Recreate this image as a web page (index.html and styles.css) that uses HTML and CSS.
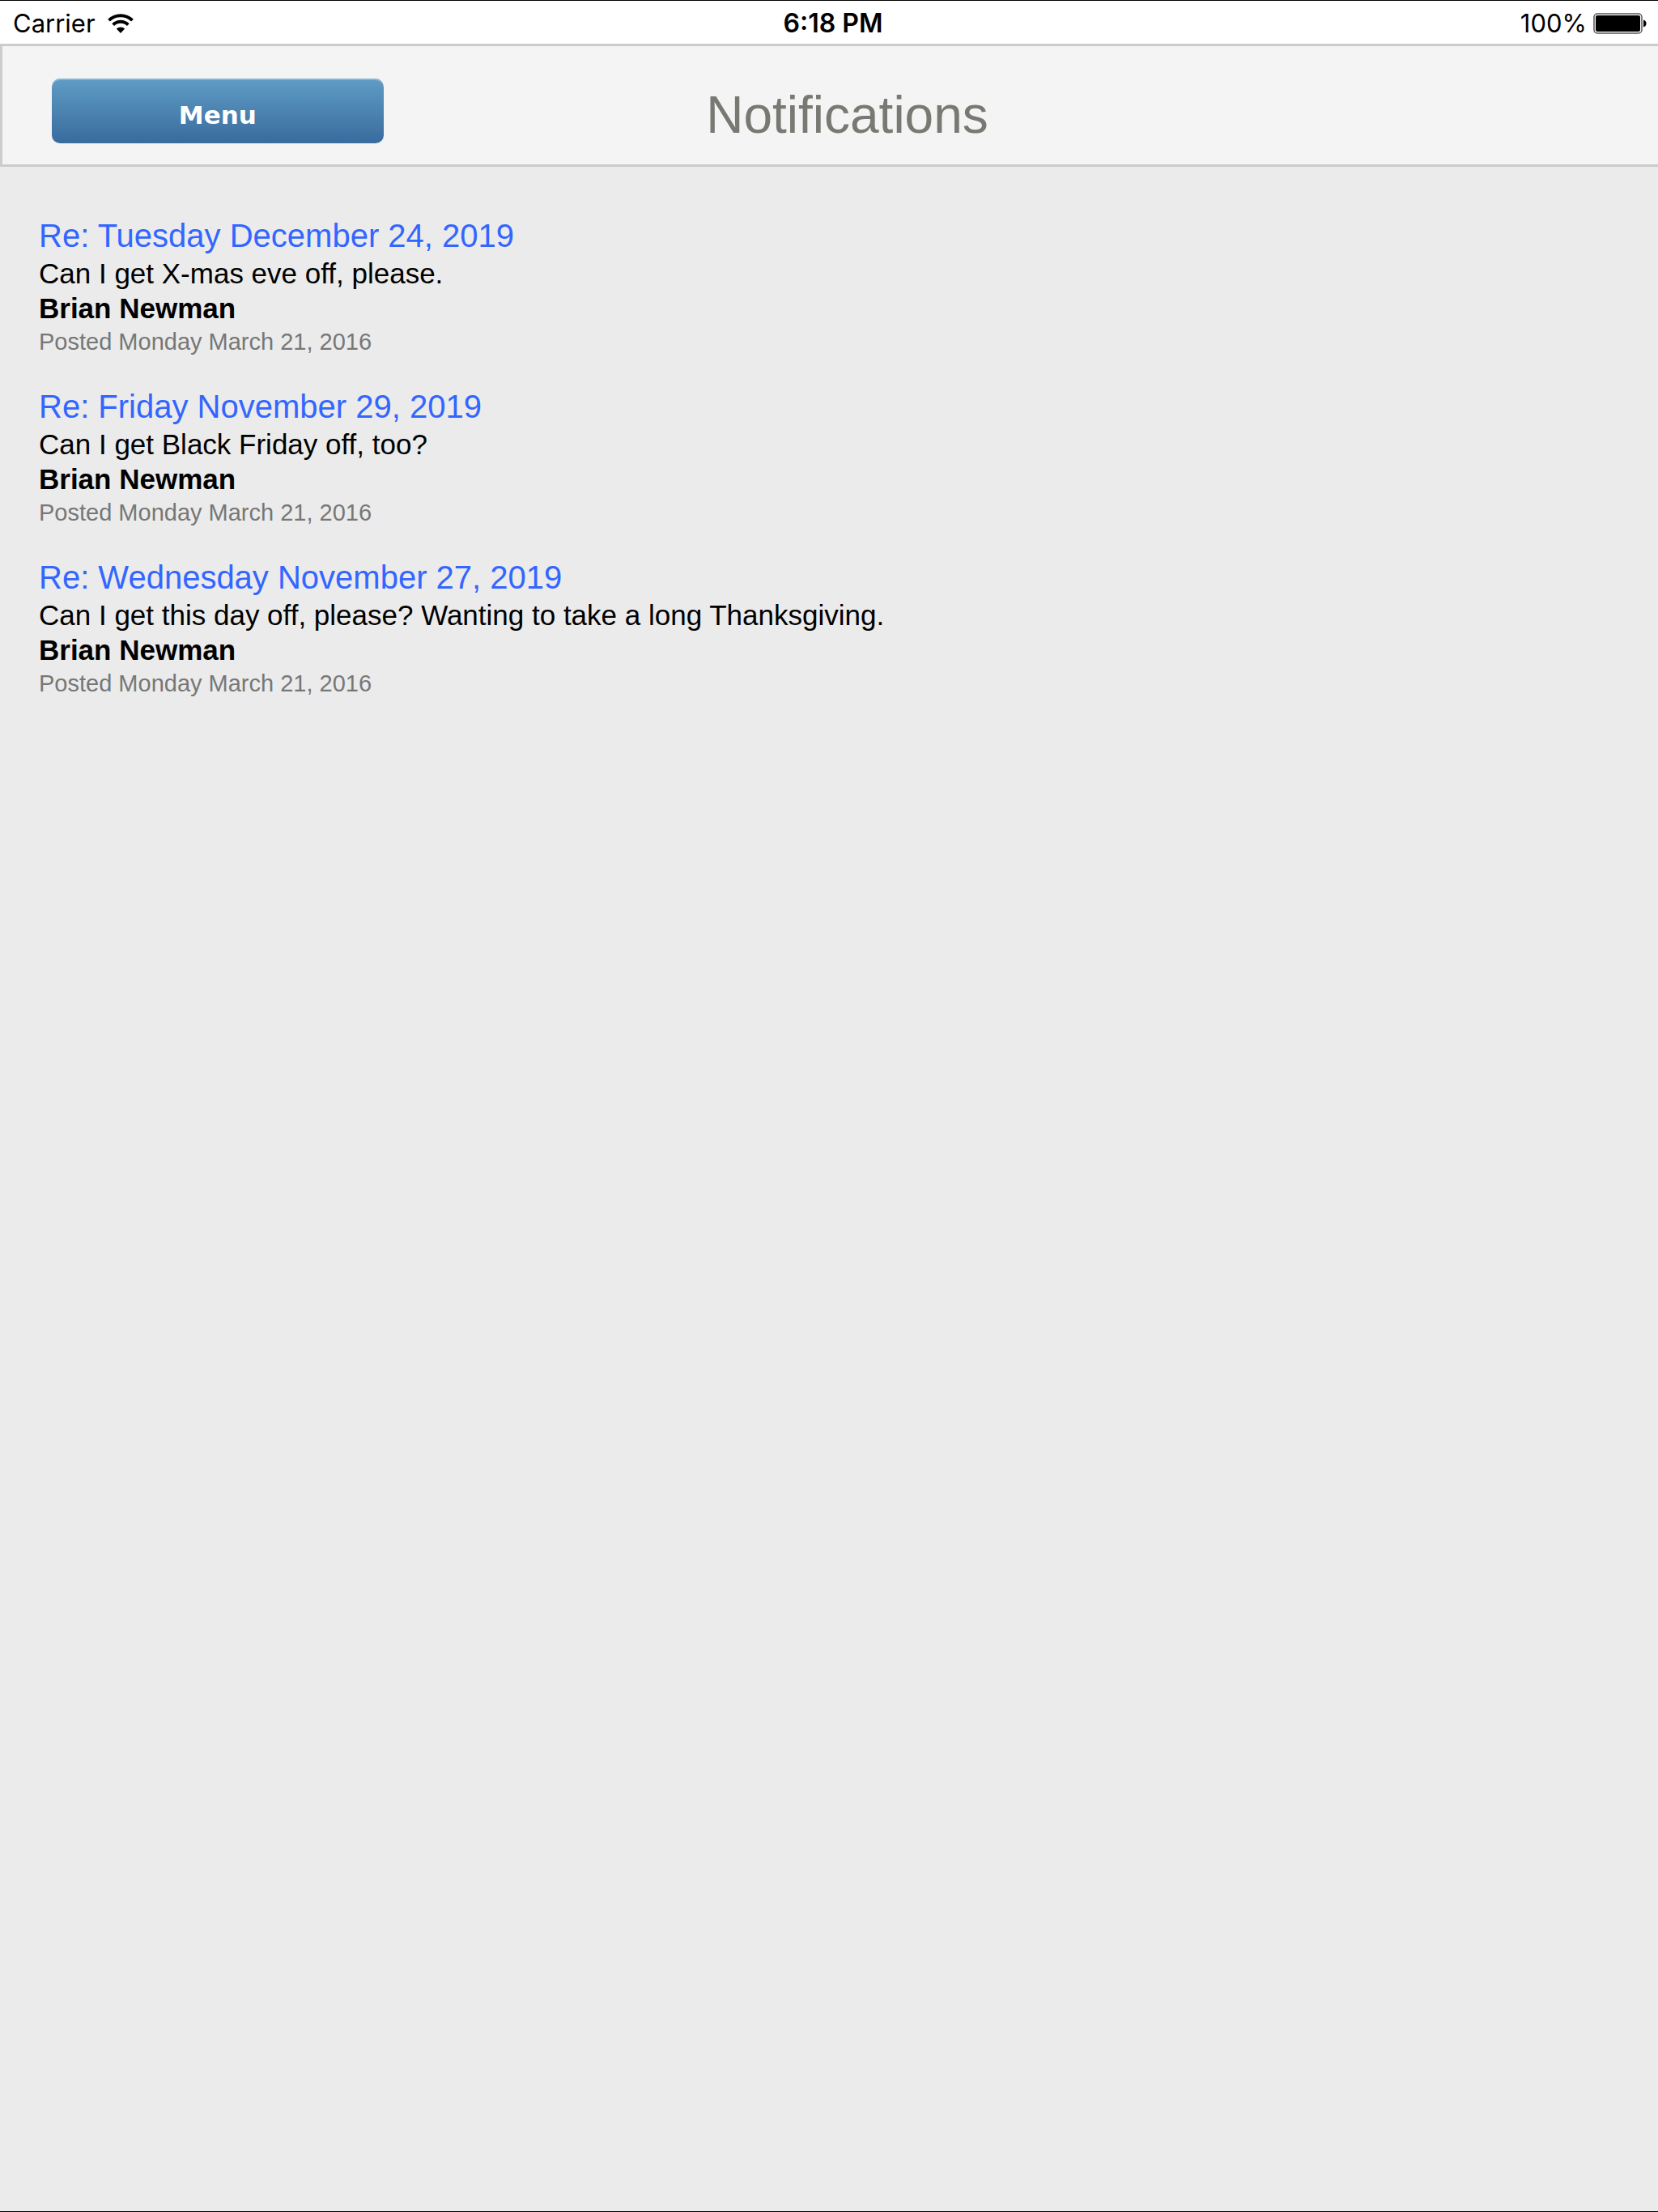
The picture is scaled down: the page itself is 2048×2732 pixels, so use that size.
FILE: index.html
```html
<!DOCTYPE html>
<html lang="en">
<head>
<meta charset="utf-8">
<meta name="viewport" content="width=device-width, initial-scale=1">
<title>Notifications</title>
<link rel="stylesheet" href="styles.css">
</head>
<body>
<div class="status-bar">
  <div class="status-left">
    <span>Carrier</span>
    <svg class="wifi" viewBox="0 0 34 26" aria-hidden="true">
      <path d="M2.500 9.200 A20.500 20.500 0 0 1 31.500 9.200" fill="none" stroke="#000" stroke-width="4"/>
      <path d="M7.700 14.600 A13 13 0 0 1 26.300 14.600" fill="none" stroke="#000" stroke-width="4"/>
      <path d="M17 25 L11.800 19.600 A7.500 7.500 0 0 1 22.200 19.600 Z" fill="#000"/>
    </svg>
  </div>
  <div class="status-time">6:18 PM</div>
  <div class="status-right">
    <span>100%</span>
    <svg class="battery" viewBox="0 0 66 26" aria-hidden="true">
      <rect x="1" y="1" width="59" height="24" rx="4" fill="none" stroke="#555" stroke-width="1.500"/>
      <rect x="3" y="3" width="55" height="20" rx="2" fill="#000"/>
      <path d="M62 8.500 C64.500 9 65.500 11 65.500 13 C65.500 15 64.500 17 62 17.500 Z" fill="#000"/>
    </svg>
  </div>
</div>
<header class="header">
  <button class="menu-button" type="button">Menu</button>
  <h1 class="page-title">Notifications</h1>
</header>
<main class="feed">
  <article class="note">
    <h2 class="note-title"><a href="#">Re: Tuesday December 24, 2019</a></h2>
    <p class="note-text">Can I get X-mas eve off, please.</p>
    <p class="note-author">Brian Newman</p>
    <p class="note-date">Posted Monday March 21, 2016</p>
  </article>
  <article class="note">
    <h2 class="note-title"><a href="#">Re: Friday November 29, 2019</a></h2>
    <p class="note-text">Can I get Black Friday off, too?</p>
    <p class="note-author">Brian Newman</p>
    <p class="note-date">Posted Monday March 21, 2016</p>
  </article>
  <article class="note">
    <h2 class="note-title"><a href="#">Re: Wednesday November 27, 2019</a></h2>
    <p class="note-text">Can I get this day off, please? Wanting to take a long Thanksgiving.</p>
    <p class="note-author">Brian Newman</p>
    <p class="note-date">Posted Monday March 21, 2016</p>
  </article>
</main>
</body>
</html>
```
FILE: styles.css
```css
* {
  box-sizing: border-box;
}

body {
  margin: 0;
  min-height: 100vh;
  border-top: 1px solid #000;
  border-bottom: 1px solid #000;
  background: #ebebeb;
  color: #000;
  font-family: "Liberation Sans", Arial, sans-serif;
}

h1,
h2,
p {
  margin: 0;
  font-weight: 400;
}

.status-bar {
  display: grid;
  grid-template-columns: 1fr auto 1fr;
  align-items: center;
  padding: 8px 14px 5px 16px;
  background: #fff;
  font-family: Inter, sans-serif;
  font-size: 31px;
  line-height: 40px;
}

.status-left,
.status-right {
  display: flex;
  align-items: center;
}

.status-left {
  gap: 14px;
}

.status-right {
  justify-content: flex-end;
  gap: 8px;
}

.status-time {
  padding-left: 8px;
  font-size: 32px;
  font-weight: 600;
}

.wifi {
  width: 34px;
  height: 26px;
}

.battery {
  width: 66px;
  height: 26px;
}

.header {
  display: grid;
  grid-template-columns: 20vw 1fr 20vw;
  align-items: start;
  padding: 40px 19px 26px 61px;
  border: 3px solid #ccc;
  border-right: 0;
  background: #f4f4f4;
}

.menu-button {
  height: 80px;
  padding: 9px 0 0;
  border: 0;
  border-radius: 10px;
  background: linear-gradient(#5f9cc5, #396b9e);
  box-shadow: inset 0 2px 0 rgba(255, 255, 255, 0.25);
  color: #fff;
  font: bold 31px "DejaVu Sans", Verdana, sans-serif;
}

.page-title {
  padding-top: 10px;
  color: #777972;
  font-size: 64px;
  line-height: 70px;
  text-align: center;
}

.feed {
  display: flex;
  flex-direction: column;
  gap: 36px;
  padding: 61px 48px;
}

.note-title {
  padding-bottom: 1px;
  font-size: 40px;
  line-height: 48px;
}

.note-title a {
  color: #36f;
  text-decoration: none;
}

.note-text,
.note-author {
  font-size: 35px;
  line-height: 43px;
}

.note-author {
  font-weight: 700;
}

.note-date {
  color: #777;
  font-size: 29px;
  line-height: 40px;
}
```
